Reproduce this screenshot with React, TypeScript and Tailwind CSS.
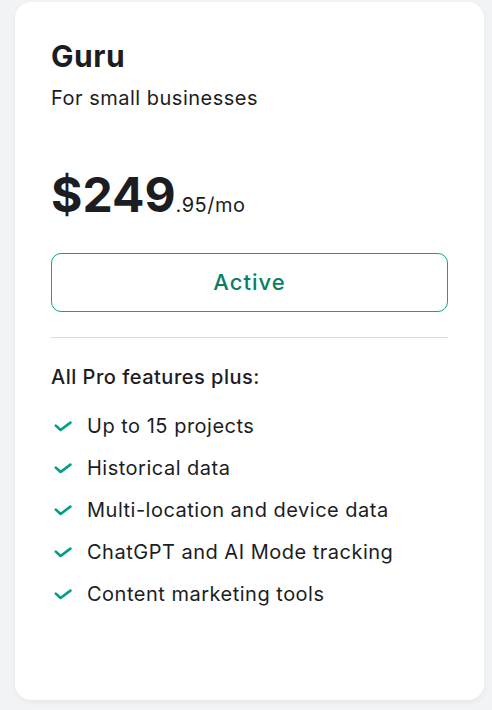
const features = [
  "Up to 15 projects",
  "Historical data",
  "Multi-location and device data",
  "ChatGPT and AI Mode tracking",
  "Content marketing tools",
]

const Check = () => (
  <svg width="18" height="11" viewBox="0 0 18 11" fill="none" className="shrink-0">
    <path d="M1.8 4.6L6.6 9L16.4 1.6" stroke="#009f81" strokeWidth="2.6" strokeLinecap="round" strokeLinejoin="round" />
  </svg>
)

export default function App() {
  return (
    <div className="min-h-[710px] bg-[#f2f3f5] pt-[2px] pr-[8px] pb-[10px] pl-[15px] font-['Inter',sans-serif] tracking-[0.5px] text-[#1b1d23]">
      <div className="h-[698px] rounded-[16px] bg-white px-[36px] pt-[36px] shadow-[0_2px_6px_rgba(0,0,0,0.05)]">
        <h2 className="text-[30px] font-bold leading-[36px]">Guru</h2>
        <p className="mt-[10px] text-[20px] leading-[28px]">For small businesses</p>
        <div className="mt-[55px] flex items-baseline">
          <span className="text-[48px] font-bold leading-[56px] tracking-normal">$249</span>
          <span className="text-[20px]">.95/mo</span>
        </div>
        <button className="mt-[30px] h-[59px] w-full rounded-[10px] border border-[#13a383] text-[22px] font-medium tracking-[1px] text-[#0a7f63]">
          Active
        </button>
        <div className="mt-[25px] h-px bg-[#d9dade]" />
        <p className="mt-[25px] text-[20px] font-medium leading-[28px]">All Pro features plus:</p>
        <ul className="mt-[21px] flex flex-col gap-[14px]">
          {features.map((f) => (
            <li key={f} className="flex items-center gap-[15px] pl-[3px] text-[20px] leading-[28px]">
              <Check />
              <span>{f}</span>
            </li>
          ))}
        </ul>
      </div>
    </div>
  )
}
